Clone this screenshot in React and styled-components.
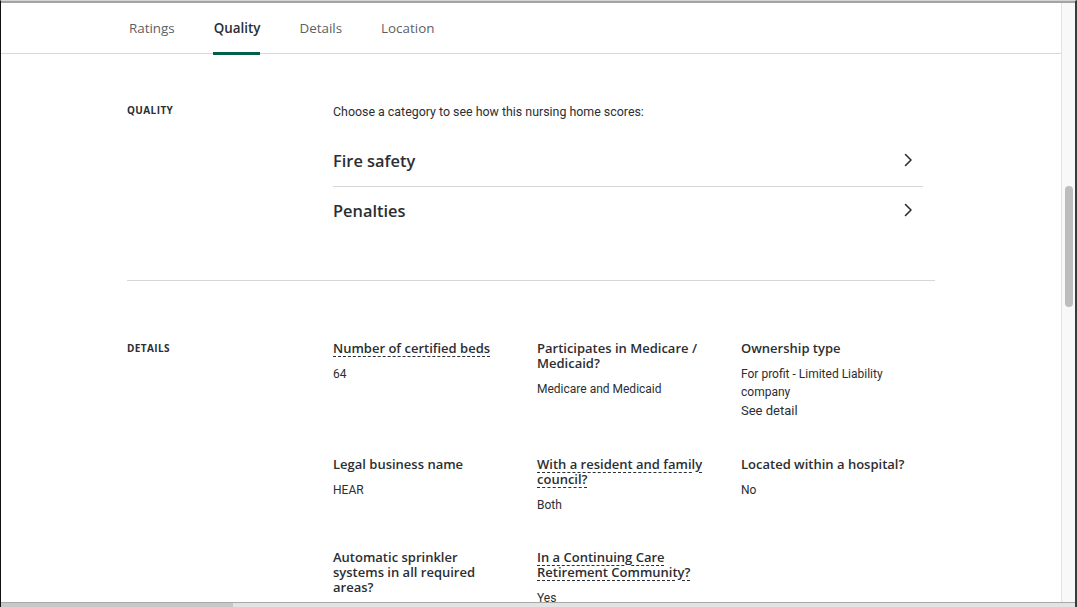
import React from "react";
import styled, { createGlobalStyle } from "styled-components";

const GlobalStyle = createGlobalStyle`
  html, body {
    margin: 0;
    padding: 0;
    overflow: hidden;
    background: #ffffff;
  }
  * {
    box-sizing: border-box;
  }
`;

const heading = `"Open Sans", "Liberation Sans", sans-serif`;
const body = `Roboto, "Liberation Sans", sans-serif`;

const Frame = styled.div`
  width: 1077px;
  height: 607px;
  display: flex;
  flex-direction: column;
  border-top: 1px solid #d4d4d4;
  border-left: 1px solid #111;
  border-right: 2px solid #3a3a3a;
  overflow: hidden;
`;

const TopEdge = styled.div`
  height: 2px;
  background: #a3a3a3;
  flex-shrink: 0;
`;

const Viewport = styled.div`
  flex: 1;
  display: flex;
  min-height: 0;
`;

const Page = styled.div`
  flex: 1;
  min-width: 0;
  overflow: hidden;
`;

const VScroll = styled.div`
  width: 14px;
  flex-shrink: 0;
  background: #f8f8f8;
  border-left: 1px solid #e2e2e2;
  padding: 183px 2px 0 3px;
`;

const VThumb = styled.div`
  height: 121px;
  border-radius: 4px;
  background: #bdbdbd;
`;

const HScroll = styled.div`
  height: 5px;
  flex-shrink: 0;
  display: flex;
  background: #e3e3e3;
  border-top: 1px solid #a8a8a8;
`;

const HThumb = styled.div`
  width: 232px;
  background: #c8c8c8;
`;

const TabBar = styled.nav`
  height: 51px;
  display: flex;
  align-items: stretch;
  gap: 39px;
  padding-left: 128px;
  border-bottom: 1px solid #d9d9d9;
`;

const Tab = styled.div`
  position: relative;
  display: flex;
  align-items: center;
  font-family: ${heading};
  font-size: 13.4px;
  font-weight: ${(p) => (p.$active ? 600 : 400)};
  color: ${(p) => (p.$active ? "#2b2e33" : "#5b5f66")};

  &::after {
    content: "";
    display: ${(p) => (p.$active ? "block" : "none")};
    position: absolute;
    left: -1px;
    right: 0;
    bottom: -2px;
    height: 3px;
    background: #005f4b;
  }
`;

const Container = styled.div`
  width: 808px;
  margin-left: 126px;
`;

const Section = styled.section`
  display: grid;
  grid-template-columns: 206px 1fr;
  padding: ${(p) => p.$pad};
  border-bottom: ${(p) => (p.$divider ? "1px solid #d6d6d6" : "none")};
`;

const SectionLabel = styled.h2`
  margin: 0;
  font-family: ${heading};
  font-size: 10px;
  font-weight: 700;
  letter-spacing: 0.4px;
  line-height: 14px;
  color: #2b2e33;
`;

const Intro = styled.p`
  margin: 0 0 15px;
  font-family: ${body};
  font-size: 12.4px;
  line-height: 18px;
  color: #2b2e33;
`;

const CategoryList = styled.div`
  width: 590px;
`;

const CategoryRow = styled.div`
  height: ${(p) => (p.$last ? 48 : 51)}px;
  display: flex;
  align-items: center;
  justify-content: space-between;
  padding: 0 8px 2px 0;
  border-bottom: ${(p) => (p.$last ? "none" : "1px solid #d6d6d6")};
  font-family: ${heading};
  font-size: 16.4px;
  font-weight: 600;
  color: #2b2e33;
`;

const Chevron = () => (
  <svg width="14" height="14" viewBox="0 0 14 14" fill="none">
    <path
      d="M4.5 1.5 L10 7 L4.5 12.5"
      stroke="#2b2e33"
      strokeWidth="1.6"
      strokeLinecap="round"
      strokeLinejoin="round"
    />
  </svg>
);

const DetailGrid = styled.div`
  display: grid;
  grid-template-columns: repeat(3, 176px);
  column-gap: 28px;
  row-gap: 36px;
  align-items: start;
`;

const Item = styled.div`
  display: flex;
  flex-direction: column;
`;

const ItemLabel = styled.div`
  font-family: ${heading};
  font-size: 13px;
  font-weight: 600;
  line-height: 15px;
  color: #2b2e33;
  margin-bottom: 9px;
`;

const Term = styled.span`
  text-decoration: underline dashed #2b2e33 1px;
  text-underline-offset: 3px;
`;

const Value = styled.div`
  font-family: ${body};
  font-size: 12px;
  line-height: 18px;
  color: #2b2e33;
`;

const SeeDetail = styled.div`
  font-family: ${body};
  font-size: 13px;
  line-height: 20px;
  color: #2b2e33;
`;

const tabs = [
  { label: "Ratings" },
  { label: "Quality", active: true },
  { label: "Details" },
  { label: "Location" },
];

const details = [
  { label: "Number of certified beds", term: true, value: "64" },
  { label: "Participates in Medicare / Medicaid?", value: "Medicare and Medicaid" },
  {
    label: "Ownership type",
    value: "For profit - Limited Liability company",
    extra: "See detail",
  },
  { label: "Legal business name", value: "HEAR" },
  { label: "With a resident and family council?", term: true, value: "Both" },
  { label: "Located within a hospital?", value: "No" },
  { label: "Automatic sprinkler systems in all required areas?", value: "" },
  {
    label: "In a Continuing Care Retirement Community?",
    term: true,
    value: "Yes",
  },
];

export default function App() {
  return (
    <>
      <GlobalStyle />
      <Frame>
        <TopEdge />
        <Viewport>
          <Page>
            <TabBar>
              {tabs.map((t) => (
                <Tab key={t.label} $active={t.active}>
                  {t.label}
                </Tab>
              ))}
            </TabBar>
            <Container>
              <Section $pad="49px 0 45px" $divider>
                <SectionLabel>QUALITY</SectionLabel>
                <div>
                  <Intro>Choose a category to see how this nursing home scores:</Intro>
                  <CategoryList>
                    <CategoryRow>
                      Fire safety
                      <Chevron />
                    </CategoryRow>
                    <CategoryRow $last>
                      Penalties
                      <Chevron />
                    </CategoryRow>
                  </CategoryList>
                </div>
              </Section>
              <Section $pad="60px 0 0">
                <SectionLabel>DETAILS</SectionLabel>
                <DetailGrid>
                  {details.map((d) => (
                    <Item key={d.label}>
                      <ItemLabel>
                        {d.term ? <Term>{d.label}</Term> : d.label}
                      </ItemLabel>
                      {d.value && <Value>{d.value}</Value>}
                      {d.extra && <SeeDetail>{d.extra}</SeeDetail>}
                    </Item>
                  ))}
                </DetailGrid>
              </Section>
            </Container>
          </Page>
          <VScroll>
            <VThumb />
          </VScroll>
        </Viewport>
        <HScroll>
          <HThumb />
        </HScroll>
      </Frame>
    </>
  );
}
